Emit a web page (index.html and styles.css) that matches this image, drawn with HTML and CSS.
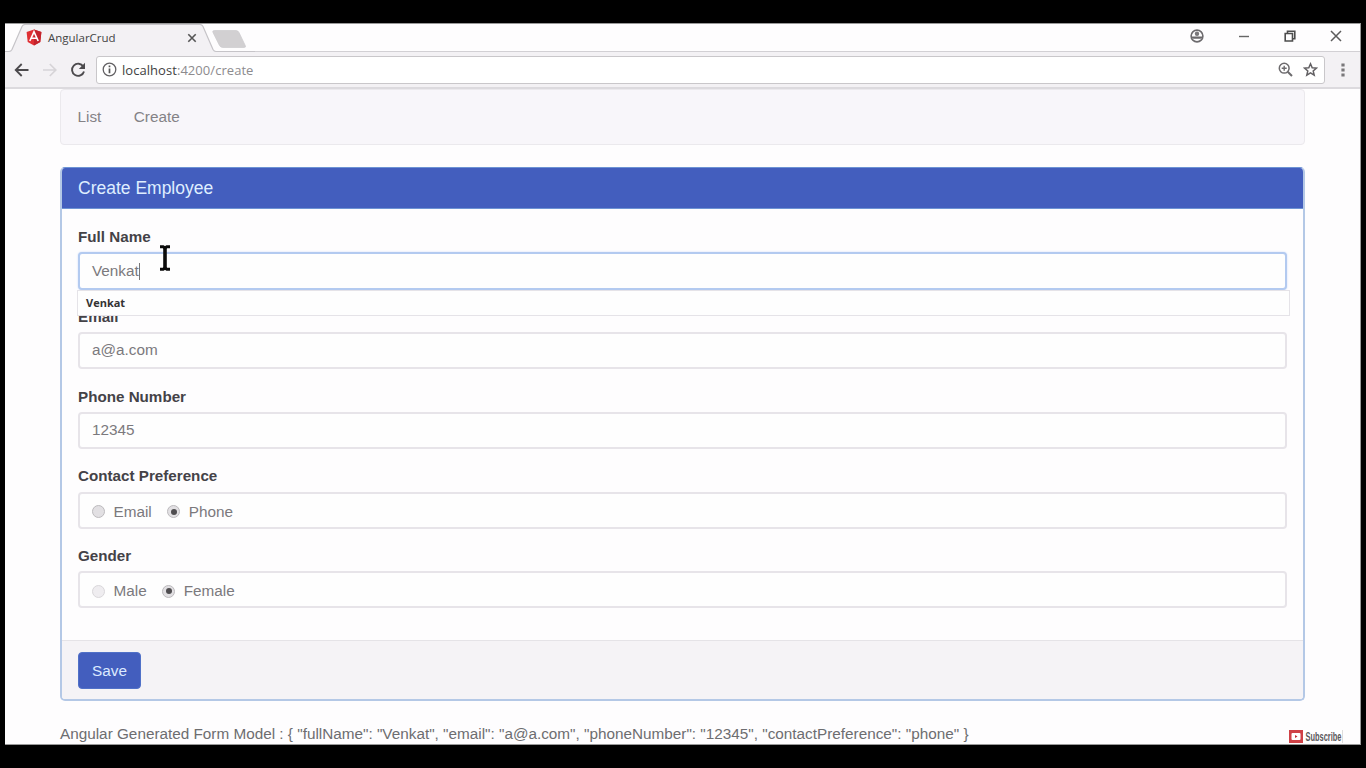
FILE: index.html
```html
<!DOCTYPE html>
<html lang="en">
<head>
<meta charset="utf-8">
<title>AngularCrud</title>
<link rel="stylesheet" href="styles.css">
</head>
<body>
<div class="window">
  <div class="titlebar">
    <svg class="tab-shape" width="250" height="29" viewBox="0 0 250 29">
      <path d="M0 27.500H4Q6 27.500 7 25.500L17 2.500Q18 .5 20 .5H195Q197 .5 198 2.500L208 25.500Q209 27.500 211 27.500H250V29H0Z" fill="#f3f1f4"/>
      <path d="M0 27.500H4Q6 27.500 7 25.500L17 2.500Q18 .5 20 .5H195Q197 .5 198 2.500L208 25.500Q209 27.500 211 27.500H250" fill="none" stroke="#c6c4c8" stroke-width="1.200"/>
      <path d="M209.500 6.500H231Q233 6.500 234 8.500L240 21Q241.500 23.500 239 23.500H218Q215.500 23.500 214.500 21.500L208 8.500Q207 6.500 209.500 6.500Z" fill="#d2d0d2" stroke="#cccacd" stroke-width=".7"/>
    </svg>
    <div class="tab">
      <svg width="16" height="17" viewBox="0 0 16 17"><path d="M8 .5L15.400 3L14.300 13L8 16.500L1.700 13L.6 3Z" fill="#df3034"/><path d="M8 .5L15.400 3L14.300 13L8 16.500Z" fill="#c3242d"/><path d="M3.800 12L8 2.800L12.200 12M5.500 9.300H10.500" fill="none" stroke="#fff" stroke-width="1.600"/></svg>
      <span class="tab-title">AngularCrud</span>
      <svg class="tab-close" width="10" height="10" viewBox="0 0 10 10"><path d="M1.300 1.300L8.700 8.700M8.700 1.300L1.300 8.700" stroke="#555" stroke-width="1.600"/></svg>
    </div>
    <div class="controls">
      <svg width="14" height="14" viewBox="0 0 14 14"><circle cx="7" cy="7" r="5.900" fill="none" stroke="#6d6b6e" stroke-width="1.600"/><circle cx="7" cy="4.700" r="2.200" fill="#7a787b"/><path d="M1.500 7.500H12.500Q12 9.800 10.500 9.800H3.500Q2 9.800 1.500 7.500Z" fill="#6a686b"/></svg>
      <svg width="12" height="14" viewBox="0 0 12 14"><path d="M1 7.500H11" stroke="#666" stroke-width="1.400"/></svg>
      <svg width="12" height="14" viewBox="0 0 12 14"><path d="M1.200 4.500H8.500V12H1.200Z M3.500 4.500V2.200H10.800V9.700H8.500" fill="none" stroke="#4d4d4d" stroke-width="1.600"/></svg>
      <svg width="12" height="14" viewBox="0 0 12 14"><path d="M1 2L11 12M11 2L1 12" stroke="#5c5c5c" stroke-width="1.500"/></svg>
    </div>
  </div>
  <div class="toolbar">
    <svg width="16" height="14" viewBox="0 0 16 14"><path d="M14.500 7H2M7.700 1L1.700 7L7.700 13" fill="none" stroke="#4c4a4d" stroke-width="1.800"/></svg>
    <svg class="forward" width="16" height="14" viewBox="0 0 16 14"><path d="M1 7H13.500M7.800 1L13.800 7L7.800 13" fill="none" stroke="#d6d4d7" stroke-width="1.700"/></svg>
    <svg class="reload" width="16" height="16" viewBox="0 0 16 16"><path d="M13.300 4.500A6.100 6.100 0 1 0 14 9.500" fill="none" stroke="#4c4a4d" stroke-width="1.900"/><path d="M15 .8V7H8.800Z" fill="#4c4a4d"/></svg>
    <div class="address">
      <svg width="15" height="15" viewBox="0 0 15 15"><circle cx="7.500" cy="7.500" r="6.300" fill="none" stroke="#626063" stroke-width="1.300"/><path d="M7.500 6.500V11.200M7.500 3.500V5.200" stroke="#555" stroke-width="1.700"/></svg>
      <span class="url"><span class="host">localhost</span>:4200/create</span>
      <svg class="magnify" width="15" height="15" viewBox="0 0 15 15"><circle cx="6.200" cy="6.200" r="4.900" fill="none" stroke="#6d6b6e" stroke-width="1.500"/><path d="M9.700 9.700L14 14" stroke="#6d6b6e" stroke-width="2"/><path d="M3.700 6.200H8.700M6.200 3.700V8.700" stroke="#6d6b6e" stroke-width="1.400"/></svg>
      <svg class="star" width="15" height="15" viewBox="0 0 15 15"><path d="M7.500 1.800L9.200 5.700L13.500 6.100L10.200 8.900L11.200 13.100L7.500 10.900L3.800 13.100L4.800 8.900L1.500 6.100L5.800 5.700Z" fill="none" stroke="#626063" stroke-width="1.500"/></svg>
    </div>
    <svg class="more" width="4" height="14" viewBox="0 0 4 14"><path d="M.4 .5H3.600V3.500H.4ZM.4 5.500H3.600V8.500H.4ZM.4 10.500H3.600V13.500H.4Z" fill="#7a787b"/></svg>
  </div>
  <main class="page">
    <nav class="navbar"><a>List</a><a>Create</a></nav>
    <form class="card">
      <h1 class="card-header">Create Employee</h1>
      <div class="card-body">
        <div class="group"><label>Full Name</label>
          <div class="control focused">Venkat<i class="caret"></i>
            <div class="suggestions">Venkat</div>
            <svg class="pointer" width="12" height="26" viewBox="0 0 12 26"><path d="M1 1.800H4.200L6 3L7.800 1.800H11M1 24.200H4.200L6 23L7.800 24.200H11" fill="none" stroke="#0b0b0b" stroke-width="2.900"/><path d="M6 2.500V23.500" stroke="#0b0b0b" stroke-width="3.600"/></svg>
          </div>
        </div>
        <div class="group"><label>Email</label><div class="control">a@a.com</div></div>
        <div class="group"><label>Phone Number</label><div class="control">12345</div></div>
        <div class="group"><label>Contact Preference</label>
          <div class="control choices"><i class="radio"></i><span>Email</span><i class="radio checked"></i><span>Phone</span></div>
        </div>
        <div class="group"><label>Gender</label>
          <div class="control choices"><i class="radio light"></i><span>Male</span><i class="radio checked"></i><span>Female</span></div>
        </div>
      </div>
      <div class="card-footer"><button type="button" class="save">Save</button></div>
    </form>
    <p class="model">Angular Generated Form Model : { "fullName": "Venkat", "email": "a@a.com", "phoneNumber": "12345", "contactPreference": "phone" }</p>
  </main>
  <div class="subscribe">
    <svg width="14" height="13" viewBox="0 0 14 13"><rect width="14" height="13" fill="#cf4146"/><rect x="2.500" y="3" width="9" height="7" rx="1" fill="#fff"/><path d="M6 5L8.500 6.500L6 8Z" fill="#c22e35"/></svg>
    <span class="subscribe-label"><span>Subscribe</span></span>
  </div>
</div>
</body>
</html>
```
FILE: styles.css
```css
* { box-sizing: border-box; }
body { margin: 0; height: 768px; padding: 23px 5px 0; background: #000; overflow: hidden; font-family: "Liberation Sans", Arial, sans-serif; font-size: 15.3px; color: #6d6d70; }
svg { display: block; flex: none; }
.window { position: relative; width: 1356px; height: 722px; background: #fefdfe; border: solid #999; border-width: 1px 1px 1px 0; overflow: hidden; display: flex; flex-direction: column; }
.titlebar { position: relative; flex: none; height: 28px; border-bottom: 1px solid #d2d0d4; display: flex; align-items: center; justify-content: space-between; }
.tab-shape { position: absolute; left: 0; top: 0; }
.tab { position: relative; display: flex; align-items: center; width: 192px; padding-left: 21px; }
.tab-title { margin-left: 6px; font: 11.5px "Open Sans", sans-serif; line-height: 16px; color: #444; }
.tab-close { margin-left: auto; }
.controls { display: flex; width: 152px; justify-content: space-between; margin: -3px 18px 0 0; }
.toolbar { flex: none; height: 37px; background: #f3f1f4; border-bottom: 2px solid #dcdade; display: flex; align-items: center; padding: 0 15px 0 9px; }
.forward { margin-left: 12px; }
.reload { margin-left: 12px; }
.address { width: 1229px; height: 28px; margin-left: 10px; background: #fff; border: 1px solid #c9c7ca; border-radius: 3px; display: flex; align-items: center; padding: 0 6px 0 5px; }
.url { margin-left: 5px; font: 13px "Open Sans", sans-serif; letter-spacing: .05px; color: #8d8b8e; }
.host { color: #3f3f42; }
.magnify { margin-left: auto; }
.star { margin-left: 10px; }
.more { margin-left: auto; }
.page { padding: 0 55px; flex: none; }
.navbar { height: 56px; padding: 0 17px 0 16.5px; background: #f8f6fa; border: 1px solid #ebe9ed; border-radius: 4px; display: flex; gap: 32.5px; align-items: center; color: #848286; }
.card { margin-top: 22px; height: 534px; border: 2px solid #b4c8e6; border-top: 1px solid #6d93d4; border-radius: 5px; display: flex; flex-direction: column; overflow: hidden; background: #fefdfe; }
.card-header { margin: 0 -1px; height: 41px; flex: none; padding: 0 17px; background: #435ebe; border-bottom: 1px solid #6d93d4; font-size: 17.5px; font-weight: 400; line-height: 40px; color: #dfeeff; }
.card-body { flex: 1; padding: 17px 16px 0; display: flex; flex-direction: column; gap: 16px; }
.group { height: 63.8px; flex: none; }
.group label { display: block; height: 26.2px; line-height: 21px; font-size: 15.2px; font-weight: 700; color: #444247; }
.control { position: relative; height: 37px; border: 2px solid #e7e4e9; border-radius: 4px; background: #fefefe; padding: 0 12px; display: flex; align-items: center; color: #7b797d; }
.focused { border-color: #b3caf0; box-shadow: 0 0 2px #c8dafa; height: 38px; z-index: 1; }
.caret { width: 1px; height: 17px; background: #777; }
.suggestions { position: absolute; left: -3px; top: 36px; width: 1213px; height: 26px; padding-left: 8px; background: #fefefe; border: 1px solid #e5e3e8; font: bold 11px/23px "Open Sans", sans-serif; color: #333; }
.pointer { position: absolute; left: 79px; top: -9px; }
.choices { padding-top: 3px; }
.choices span { margin-left: 8.5px; }
.radio { width: 13px; height: 13px; border-radius: 50%; border: 1px solid #bcbabd; background: #e2e0e3; display: flex; align-items: center; justify-content: center; }
.choices span + .radio { margin-left: 15.5px; }
.light { border-color: #d9d7da; background: #efedf0; }
.checked::after { content: ""; width: 6px; height: 6px; border-radius: 50%; background: #4f4d50; }
.card-footer { flex: none; height: 59px; padding: 11px 16px; background: #f5f3f6; border-top: 1px solid #e5e3e7; }
.save { display: block; width: 63px; height: 37px; padding: 0; border: 1px solid #5071c8; border-radius: 4px; background: #435ebe; font: 15.3px "Liberation Sans", sans-serif; color: #dceaff; }
.model { margin: 22px 0 0; line-height: 22px; white-space: nowrap; }
.subscribe { position: absolute; left: 1284px; top: 706px; display: flex; }
.subscribe-label { width: 40px; height: 13px; border-right: 1px solid #ddd; background: #fff; }
.subscribe-label span { display: block; width: 60px; padding-left: 4px; font: bold 12px/14px "Liberation Sans", sans-serif; color: #5a585b; transform: scaleX(.62); transform-origin: 0 0; }
```
